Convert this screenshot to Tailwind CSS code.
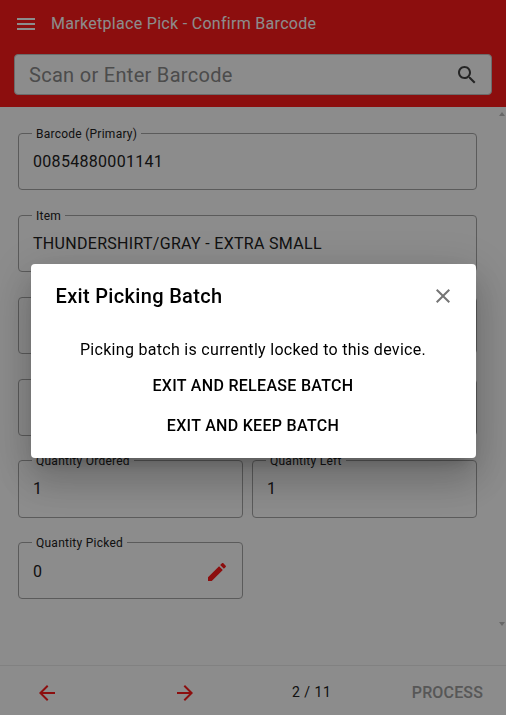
<!DOCTYPE html>
<html lang="en">
<head>
  <meta charset="UTF-8" />
  <meta name="viewport" content="width=device-width, initial-scale=1.0"/>
  <title>Marketplace Pick - Confirm Barcode</title>
  <script src="https://cdn.jsdelivr.net/npm/@tailwindcss/browser@4"></script>
</head>
<body class="h-[715px] w-[506px] overflow-hidden bg-white font-['Roboto',sans-serif] text-[#212121]">
  <div class="flex h-[715px] flex-col">
    <!-- Header -->
    <header class="h-[107px] shrink-0 bg-[#ff1a1a] px-[14px]">
      <div class="flex h-[47px] items-center">
        <svg class="h-[24px] w-[24px] text-white" viewBox="0 0 24 24" fill="currentColor"><path d="M3 18h18v-2H3v2zm0-5h18v-2H3v2zm0-7v2h18V6H3z"/></svg>
        <span class="ml-[13px] text-[16px] font-normal tracking-[0.3px] text-white">Marketplace Pick - Confirm Barcode</span>
      </div>
      <div class="mt-[7px] flex h-[41px] items-center justify-between rounded-[4px] border border-[#c4c4c4] bg-white pl-[14px] pr-[12px]">
        <span class="text-[20px] tracking-[0.3px] text-[#8a8a8a]">Scan or Enter Barcode</span>
        <svg class="h-[24px] w-[24px] text-[#444]" viewBox="0 0 24 24" fill="currentColor"><path d="M15.5 14h-.79l-.28-.27C15.41 12.59 16 11.11 16 9.5 16 5.91 13.09 3 9.5 3S3 5.91 3 9.5 5.91 16 9.5 16c1.61 0 3.09-.59 4.23-1.57l.27.28v.79l5 4.99L20.49 19l-4.99-5zm-6 0C7.01 14 5 11.99 5 9.5S7.01 5 9.5 5 14 7.01 14 9.5 11.99 14 9.5 14z"/></svg>
      </div>
    </header>

    <!-- Form -->
    <main class="relative flex flex-1 flex-col pl-[18px] pr-[29px] pt-[19px]">
      <fieldset class="h-[64px] rounded-[4px] border border-[#a6a6a6] px-[14px]">
        <legend class="ml-[-1px] px-[4px] text-[12px] leading-[14px] tracking-[0.25px]"><span class="relative top-[1px]">Barcode (Primary)</span></legend>
        <div class="mt-[10px] text-[16px] leading-[24px] tracking-[0.3px]">00854880001141</div>
      </fieldset>
      <fieldset class="mt-[18px] h-[64px] rounded-[4px] border border-[#a6a6a6] px-[14px]">
        <legend class="ml-[-1px] px-[4px] text-[12px] leading-[14px] tracking-[0.25px]"><span class="relative top-[1px]">Item</span></legend>
        <div class="mt-[10px] text-[16px] leading-[24px] tracking-[0.3px]">THUNDERSHIRT/GRAY - EXTRA SMALL</div>
      </fieldset>
      <div class="mt-[25px] h-[57px] rounded-[4px] border border-[#a6a6a6]"></div>
      <div class="mt-[25px] h-[57px] rounded-[4px] border border-[#a6a6a6]"></div>
      <div class="mt-[17px] grid grid-cols-2 gap-x-[9px]">
        <fieldset class="h-[65px] rounded-[4px] border border-[#a6a6a6] px-[14px]">
          <legend class="ml-[-1px] px-[4px] text-[12px] leading-[14px] tracking-[0.25px]"><span class="relative top-[1px]">Quantity Ordered</span></legend>
          <div class="mt-[10px] text-[16px] leading-[24px]">1</div>
        </fieldset>
        <fieldset class="h-[65px] rounded-[4px] border border-[#a6a6a6] px-[14px]">
          <legend class="ml-[-1px] px-[4px] text-[12px] leading-[14px] tracking-[0.25px]"><span class="relative top-[1px]">Quantity Left</span></legend>
          <div class="mt-[10px] text-[16px] leading-[24px]">1</div>
        </fieldset>
      </div>
      <div class="mt-[17px] grid grid-cols-2 gap-x-[9px]">
        <fieldset class="h-[64px] rounded-[4px] border border-[#a6a6a6] pl-[14px] pr-[13px]">
          <legend class="ml-[-1px] px-[4px] text-[12px] leading-[14px] tracking-[0.25px]"><span class="relative top-[1px]">Quantity Picked</span></legend>
          <div class="mt-[11px] flex items-center justify-between text-[16px] leading-[24px]">
            <span>0</span>
            <svg class="h-[24px] w-[24px] text-[#ff1a1a]" viewBox="0 0 24 24" fill="currentColor"><path d="M3 17.25V21h3.75L17.81 9.94l-3.75-3.75L3 17.25zM20.71 7.04c.39-.39.39-1.02 0-1.41l-2.34-2.34c-.39-.39-1.02-.39-1.41 0l-1.83 1.83 3.75 3.75 1.83-1.83z"/></svg>
          </div>
        </fieldset>
      </div>
      <!-- Scrollbar arrows -->
      <div class="absolute right-[1px] top-[5px] h-0 w-0 border-x-[3px] border-b-[4px] border-x-transparent border-b-[#bdbdbd]"></div>
      <div class="absolute right-[1px] top-[515px] h-0 w-0 border-x-[3px] border-t-[4px] border-x-transparent border-t-[#bdbdbd]"></div>
    </main>

    <!-- Bottom bar -->
    <footer class="flex h-[50px] shrink-0 items-center border-t border-[#ececec] bg-white pt-[4px]">
      <svg class="ml-[35px] h-[24px] w-[24px] text-[#ff1a1a]" viewBox="0 0 24 24" fill="currentColor"><path d="M20 11H7.83l5.59-5.59L12 4l-8 8 8 8 1.41-1.41L7.83 13H20v-2z"/></svg>
      <svg class="ml-[114px] h-[24px] w-[24px] text-[#ff1a1a]" viewBox="0 0 24 24" fill="currentColor"><path d="M12 4l-1.41 1.41L16.17 11H4v2h12.17l-5.58 5.59L12 20l8-8z"/></svg>
      <span class="ml-[95px] text-[14px] tracking-[0.5px]">2 / 11</span>
      <span class="ml-auto mr-[23px] text-[16px] font-medium tracking-[0.15px] text-[#9e9e9e]">PROCESS</span>
    </footer>
  </div>

  <!-- Dialog -->
  <div class="fixed inset-0 flex items-center justify-center bg-black/45 pt-[7px]">
    <div class="h-[194px] w-[445px] rounded-[4px] bg-white shadow-[0_11px_15px_-7px_rgba(0,0,0,0.2),0_24px_38px_3px_rgba(0,0,0,0.14),0_9px_46px_8px_rgba(0,0,0,0.12)]">
      <div class="flex h-[64px] items-center justify-between pl-[25px] pr-[21px]">
        <h2 class="text-[20px] font-medium leading-[24px] tracking-[0.33px] text-black">Exit Picking Batch</h2>
        <svg class="h-[24px] w-[24px] text-[#757575]" viewBox="0 0 24 24" fill="currentColor"><path d="M19 6.41L17.59 5 12 10.59 6.41 5 5 6.41 10.59 12 5 17.59 6.41 19 12 13.41 17.59 19 19 17.59 13.41 12z"/></svg>
      </div>
      <p class="mt-[10px] text-center text-[16px] leading-[24px] tracking-[0.3px] text-black">Picking batch is currently locked to this device.</p>
      <button class="mt-[9px] block h-[30px] w-full text-center text-[16px] font-medium tracking-[0.3px] text-black">EXIT AND RELEASE BATCH</button>
      <button class="mt-[10px] block h-[30px] w-full text-center text-[16px] font-medium tracking-[0.3px] text-black">EXIT AND KEEP BATCH</button>
    </div>
  </div>
</body>
</html>
